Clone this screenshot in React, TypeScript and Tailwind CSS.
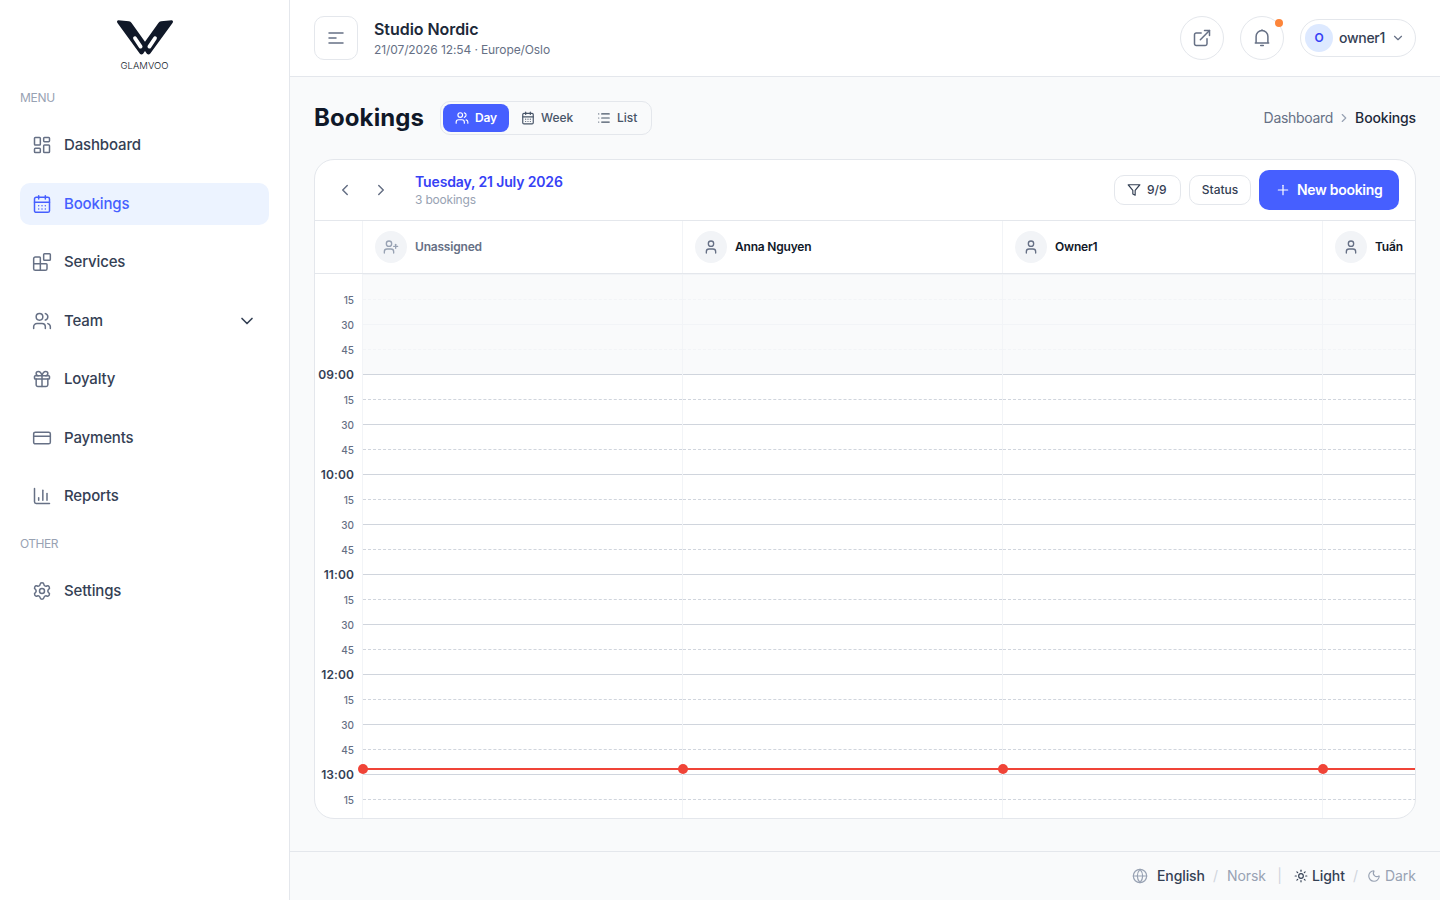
import React from 'react';
import {
  Blocks,
  CalendarDays,
  ChartColumn,
  ChevronDown,
  ChevronLeft,
  ChevronRight,
  CreditCard,
  ExternalLink,
  Gift,
  Globe,
  LayoutDashboard,
  List,
  Moon,
  Plus,
  Settings,
  Sun,
  User,
  UserPlus,
  Users,
} from 'lucide-react';
import type { LucideIcon } from 'lucide-react';
import clsx from 'clsx';

interface NavItem {
  label: string;
  icon: LucideIcon;
  active?: boolean;
  hasChildren?: boolean;
}

const MENU: NavItem[] = [
  { label: 'Dashboard', icon: LayoutDashboard },
  { label: 'Bookings', icon: CalendarDays, active: true },
  { label: 'Services', icon: Blocks },
  { label: 'Team', icon: Users, hasChildren: true },
  { label: 'Loyalty', icon: Gift },
  { label: 'Payments', icon: CreditCard },
  { label: 'Reports', icon: ChartColumn },
];

const OTHER: NavItem[] = [{ label: 'Settings', icon: Settings }];

const STAFF = [
  { name: 'Unassigned', unassigned: true },
  { name: 'Anna Nguyen' },
  { name: 'Owner1' },
  { name: 'Tuấn' },
];

// 08:15 -> 13:15 in 15 minute steps
const SLOTS = Array.from({ length: 21 }, (_, i) => {
  const minutes = 8 * 60 + 15 + i * 15;
  const m = minutes % 60;
  return {
    minutes,
    isHour: m === 0,
    dashed: m === 15 || m === 45,
    closed: minutes <= 9 * 60,
    label: m === 0 ? `${String(minutes / 60).padStart(2, '0')}:00` : String(m),
  };
});

function Logo() {
  return (
    <div className="flex flex-col items-center pt-5">
      <svg width="56" height="35" viewBox="0 0 56 35" fill="none">
        <path
          d="M1.2 0.3 L12 1.3 Q13.6 1.5 14.6 2.9 L28 21.8 L41.4 2.9 Q42.4 1.5 44 1.3 L54.8 0.3 Q56.6 0.6 55.7 2.8 L33.3 33.6 Q31.6 35.4 29.9 33.8 L28 31 L26.1 33.8 Q24.4 35.4 22.7 33.6 L0.3 2.8 Q-0.6 0.6 1.2 0.3 Z"
          fill="#101828"
        />
        <path d="M18 18.2 L23.6 26.6" stroke="#fff" strokeWidth="3.8" strokeLinecap="round" />
        <path d="M38 18.2 L32.4 26.6" stroke="#fff" strokeWidth="3.8" strokeLinecap="round" />
      </svg>
      <span className="mt-[5px] h-3 text-[9.5px] leading-3 font-light tracking-[0.02px] text-[#101828]">GLAMVOO</span>
    </div>
  );
}

function NavLink({ label, icon: Icon, active, hasChildren }: NavItem) {
  return (
    <a
      className={clsx(
        'flex h-[42.5px] items-center gap-3 rounded-[10px] px-3 text-[15px] font-medium tracking-[-0.15px]',
        active ? 'bg-[#ecf3ff] text-[#465fff]' : 'text-[#344054]',
      )}
    >
      <Icon size={20} strokeWidth={1.8} className={active ? 'text-[#465fff]' : 'text-[#667085]'} />
      <span>{label}</span>
      {hasChildren && <ChevronDown size={20} strokeWidth={2} className="ml-auto" />}
    </a>
  );
}

function Sidebar() {
  return (
    <aside className="flex w-[290px] shrink-0 flex-col border-r border-[#e4e7ec] bg-white px-5">
      <div className="h-[88px]">
        <Logo />
      </div>
      <h2 className="mb-4 text-xs leading-5 tracking-[-0.3px] text-[#98a2b3]">MENU</h2>
      <nav className="flex flex-col gap-4">
        {MENU.map((item) => (
          <NavLink key={item.label} {...item} />
        ))}
      </nav>
      <h2 className="mt-4 mb-4 text-xs leading-5 tracking-[-0.5px] text-[#98a2b3]">OTHER</h2>
      <nav>
        {OTHER.map((item) => (
          <NavLink key={item.label} {...item} />
        ))}
      </nav>
    </aside>
  );
}

function BellIcon() {
  return (
    <svg width="20" height="20" viewBox="0 0 20 20" fill="none" stroke="currentColor" strokeWidth="1.5" strokeLinecap="round">
      <path d="M10 2v0.6" />
      <path d="M4.1 14.6V8.5a5.9 5.9 0 0 1 11.8 0v6.1" />
      <path d="M3.3 14.9h13.4" />
      <path d="M8.7 17.6h2.6" />
    </svg>
  );
}

function Header() {
  return (
    <header className="flex h-[77px] shrink-0 items-center border-b border-[#e4e7ec] bg-white px-6 pb-px">
      <button className="flex size-11 items-center justify-center rounded-[10px] border border-[#e4e7ec] text-[#667085]">
        <svg width="16" height="12" viewBox="0 0 16 12" stroke="currentColor" strokeWidth="1.5" strokeLinecap="round">
          <path d="M1 1h14M1 6h7M1 11h14" />
        </svg>
      </button>
      <div className="ml-4 pt-0.5">
        <p className="text-base leading-5 font-semibold tracking-[-0.05px] text-[#1d2939]">Studio Nordic</p>
        <p className="mt-0.5 text-xs leading-[18px] tracking-[-0.1px] text-[#667085]">21/07/2026 12:54 · Europe/Oslo</p>
      </div>
      <div className="ml-auto flex items-center gap-4">
        <button className="flex size-11 items-center justify-center rounded-full border border-[#e4e7ec] text-[#667085]">
          <ExternalLink size={20} strokeWidth={1.8} />
        </button>
        <button className="relative flex size-11 items-center justify-center rounded-full border border-[#e4e7ec] text-[#667085]">
          <BellIcon />
          <span className="absolute top-0.5 right-0 size-2 rounded-full bg-[#fd853a]" />
        </button>
        <button className="flex h-[38px] w-[116px] items-center rounded-full border border-[#e4e7ec] pl-1 text-[#344054]">
          <span className="flex size-7 items-center justify-center rounded-full bg-[#dde9ff] text-xs font-semibold text-[#3641f5]">O</span>
          <span className="ml-1.5 w-[46px] text-sm font-medium tracking-[-0.3px] whitespace-nowrap">owner1</span>
          <ChevronDown size={14} strokeWidth={2} className="ml-1.5 text-[#667085]" />
        </button>
      </div>
    </header>
  );
}

function ViewSwitch() {
  return (
    <div className="ml-4 flex h-[34px] w-[212px] items-center rounded-[10px] border border-[#e4e7ec] p-0.5 text-xs font-medium text-[#475467]">
      <button className="flex h-7 w-[66px] items-center gap-1.5 rounded-lg bg-[#465fff] pl-3 font-semibold tracking-[-0.2px] text-white">
        <Users size={14} strokeWidth={2} />
        Day
      </button>
      <button className="flex h-7 w-[76px] items-center gap-1.5 pl-3">
        <CalendarDays size={14} strokeWidth={2} />
        Week
      </button>
      <button className="flex h-7 items-center gap-1.5 pl-3">
        <List size={14} strokeWidth={2} />
        List
      </button>
    </div>
  );
}

function Toolbar() {
  return (
    <div className="flex h-[61px] shrink-0 items-center border-b border-[#e4e7ec] pr-4 pl-3">
      <button className="flex size-9 items-center justify-center text-[#667085]">
        <ChevronLeft size={18} strokeWidth={2} />
      </button>
      <button className="flex size-9 items-center justify-center text-[#667085]">
        <ChevronRight size={18} strokeWidth={2} />
      </button>
      <div className="ml-4">
        <p className="text-sm leading-5 font-semibold tracking-[-0.14px] text-[#3641f5]">Tuesday, 21 July 2026</p>
        <p className="text-xs leading-4 tracking-[-0.2px] text-[#98a2b3]">3 bookings</p>
      </div>
      <div className="ml-auto flex items-center gap-2 text-xs font-medium text-[#344054]">
        <button className="flex h-[30px] w-[67px] items-center gap-1.5 rounded-[10px] border border-[#e4e7ec] pl-3">
          <svg width="14" height="14" viewBox="0 0 24 24" fill="none" stroke="currentColor" strokeWidth="2" strokeLinejoin="round">
            <path d="M22 3H2l8 9.46V19l4 2v-8.54L22 3z" />
          </svg>
          9/9
        </button>
        <button className="flex h-[30px] w-[62px] items-center justify-center rounded-[10px] border border-[#e4e7ec]">Status</button>
        <button className="flex h-10 w-[140px] items-center gap-1.5 rounded-[10px] bg-[#465fff] pl-4 text-sm font-semibold tracking-[-0.3px] whitespace-nowrap text-white">
          <Plus size={16} strokeWidth={1.8} />
          New booking
        </button>
      </div>
    </div>
  );
}

function StaffHeader() {
  return (
    <div className="flex h-[53px] shrink-0 border-b border-[#e4e7ec]">
      <div className="w-12 shrink-0 border-r border-[#f2f4f7]" />
      {STAFF.map(({ name, unassigned }) => (
        <div key={name} className="flex w-80 shrink-0 items-center gap-2 border-r border-[#f2f4f7] px-3">
          <span
            className={clsx(
              'flex size-8 items-center justify-center rounded-full bg-[#f2f4f7]',
              unassigned ? 'text-[#98a2b3]' : 'text-[#667085]',
            )}
          >
            {unassigned ? <UserPlus size={16} strokeWidth={2} /> : <User size={16} strokeWidth={2} />}
          </span>
          <span className={clsx('text-xs font-semibold tracking-[-0.2px]', unassigned ? 'text-[#667085]' : 'text-[#101828]')}>
            {name}
          </span>
        </div>
      ))}
    </div>
  );
}

function DayGrid() {
  return (
    <div className="relative flex min-h-0 flex-1 overflow-hidden">
      <div className="flex w-12 shrink-0 flex-col items-end border-r border-[#f2f4f7] pt-[13px] pr-2">
        {SLOTS.map((slot) => (
          <span
            key={slot.minutes}
            className={clsx(
              'h-[25px] shrink-0',
              slot.isHour
                ? 'text-xs leading-[25px] font-semibold tracking-[0.1px] text-[#344054]'
                : 'text-[10px] leading-[27px] font-medium text-[#667085]',
            )}
          >
            {slot.label}
          </span>
        ))}
      </div>
      {STAFF.map(({ name }) => (
        <div key={name} className="flex w-80 shrink-0 flex-col border-r border-[#f2f4f7]">
          <div className="h-px shrink-0 bg-[#f2f4f7]" />
          {SLOTS.map((slot) => (
            <div
              key={slot.minutes}
              className={clsx(
                'h-[25px] shrink-0 border-b',
                slot.dashed && 'border-dashed',
                slot.closed && 'bg-[#f9fafb]',
                slot.closed && !slot.isHour ? 'border-[#f2f4f7]' : 'border-[#d0d5dd]',
              )}
            />
          ))}
        </div>
      ))}
      {/* current time */}
      <div className="absolute top-[494px] right-0 left-12 h-0.5 bg-[#f04438]">
        <span className="absolute -top-1 -left-[5px] size-2.5 rounded-full bg-[#f04438]" />
        <span className="absolute -top-1 left-[315px] size-2.5 rounded-full bg-[#f04438]" />
        <span className="absolute -top-1 left-[635px] size-2.5 rounded-full bg-[#f04438]" />
        <span className="absolute -top-1 left-[955px] size-2.5 rounded-full bg-[#f04438]" />
      </div>
    </div>
  );
}

function Footer() {
  return (
    <footer className="flex h-[49px] shrink-0 items-center justify-end border-t border-[#e4e7ec] px-6 text-sm tracking-[-0.1px] text-[#98a2b3]">
      <Globe size={16} strokeWidth={1.8} />
      <span className="ml-2 w-12 pl-px font-medium text-[#344054]">English</span>
      <span className="w-[23px] text-center text-[#d0d5dd]">/</span>
      <span className="w-[38px]">Norsk</span>
      <span className="w-[29px] text-center text-[#d0d5dd]">|</span>
      <Sun size={14} strokeWidth={2} className="text-[#344054]" />
      <span className="ml-1 w-8 font-medium text-[#344054]">Light</span>
      <span className="w-[23px] text-center text-[#d0d5dd]">/</span>
      <Moon size={14} strokeWidth={2} />
      <span className="ml-1 w-[31px]">Dark</span>
    </footer>
  );
}

export default function App() {
  return (
    <div className="flex h-screen overflow-hidden bg-[#f9fafb] font-['Inter',sans-serif]">
      <Sidebar />
      <div className="flex min-w-0 flex-1 flex-col">
        <Header />
        <main className="flex min-h-0 flex-1 flex-col px-6 pt-6">
          <div className="flex h-[34px] items-center">
            <h1 className="w-[110px] text-2xl font-bold tracking-[0.1px] text-[#101828]">Bookings</h1>
            <ViewSwitch />
            <div className="ml-auto flex items-center text-sm">
              <span className="tracking-[-0.3px] text-[#667085]">Dashboard</span>
              <ChevronRight size={14} strokeWidth={2} className="mx-1 text-[#98a2b3]" />
              <span className="font-medium tracking-[-0.15px] text-[#1d2939]">Bookings</span>
            </div>
          </div>
          <section className="mt-6 flex h-[660px] shrink-0 flex-col overflow-hidden rounded-[20px] border border-[#e4e7ec] bg-white">
            <Toolbar />
            <StaffHeader />
            <DayGrid />
          </section>
        </main>
        <Footer />
      </div>
    </div>
  );
}
